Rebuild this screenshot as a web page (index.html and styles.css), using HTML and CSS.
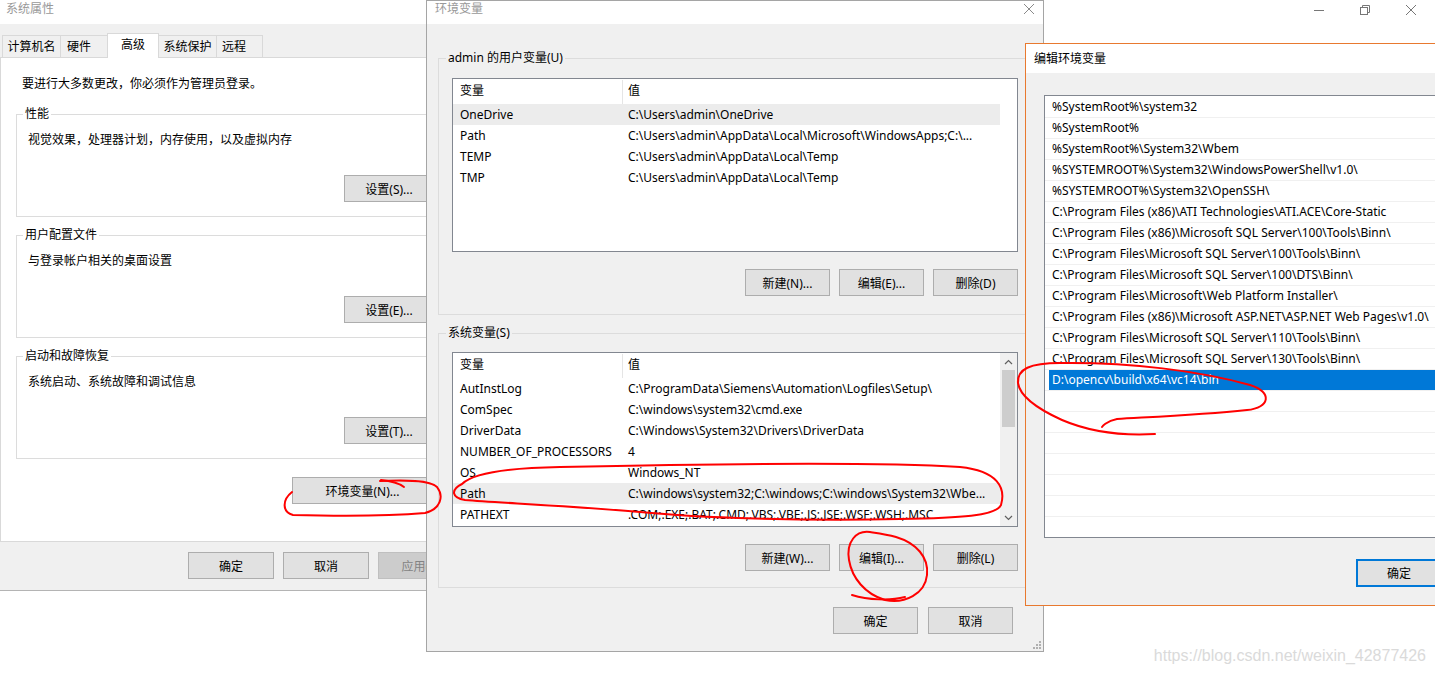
FILE: index.html
```html
<!DOCTYPE html>
<html>
<head>
    <link rel="stylesheet" href="styles.css">
</head>
<body>
    <!-- window behind, only its caption buttons show -->
    <div class="back-caption">
        <div class="cap-btn">
            <svg width="12" height="10" viewBox="0 0 12 10"><path d="M1 5.5h10" stroke="#777" stroke-width="1"/></svg>
        </div>
        <div class="cap-btn">
            <svg width="12" height="12" viewBox="0 0 12 12" fill="none" stroke="#777" stroke-width="1"><rect x="1.5" y="3.5" width="7" height="7"/><path d="M3.5 3.5v-2h7v7h-2"/></svg>
        </div>
        <div class="cap-btn">
            <svg width="12" height="12" viewBox="0 0 12 12" stroke="#777" stroke-width="1"><path d="M1 1l10 10M11 1L1 11"/></svg>
        </div>
    </div>

    <!-- 系统属性 -->
    <div class="win win-sys">
        <div class="titlebar">系统属性</div>
        <div class="win-body">
            <div class="tabs">
                <div class="tab tab-name">计算机名</div>
                <div class="tab tab-hw">硬件</div>
                <div class="tab tab-adv active">高级</div>
                <div class="tab tab-prot">系统保护</div>
                <div class="tab tab-remote">远程</div>
            </div>
            <div class="tab-panel">
                <p class="note">要进行大多数更改，你必须作为管理员登录。</p>
                <fieldset class="group">
                    <legend>性能</legend>
                    <p class="desc">视觉效果，处理器计划，内存使用，以及虚拟内存</p>
                    <div class="actions"><button class="btn btn-set">设置(S)...</button></div>
                </fieldset>
                <fieldset class="group">
                    <legend>用户配置文件</legend>
                    <p class="desc">与登录帐户相关的桌面设置</p>
                    <div class="actions"><button class="btn btn-set">设置(E)...</button></div>
                </fieldset>
                <fieldset class="group">
                    <legend>启动和故障恢复</legend>
                    <p class="desc">系统启动、系统故障和调试信息</p>
                    <div class="actions"><button class="btn btn-set">设置(T)...</button></div>
                </fieldset>
                <div class="env-row"><button class="btn btn-env">环境变量(N)...</button></div>
            </div>
            <div class="sys-footer">
                <button class="btn btn-foot">确定</button>
                <button class="btn btn-foot">取消</button>
                <button class="btn btn-foot disabled">应用(A)</button>
            </div>
        </div>
    </div>

    <!-- 环境变量 -->
    <div class="win win-env">
        <div class="titlebar">
            <span>环境变量</span>
            <svg class="close-x" width="12" height="12" viewBox="0 0 12 12" stroke="#8a8a8a" stroke-width="1"><path d="M1 1l10 10M11 1L1 11"/></svg>
        </div>
        <div class="env-body">
            <fieldset class="var-group">
                <legend>admin 的用户变量(U)</legend>
                <div class="listview user-list">
                    <div class="lv-main">
                        <div class="lv-head"><span class="c1">变量</span><span class="c2">值</span></div>
                        <div class="lv-row hl"><span class="c1">OneDrive</span><span class="c2">C:\Users\admin\OneDrive</span></div>
                        <div class="lv-row"><span class="c1">Path</span><span class="c2">C:\Users\admin\AppData\Local\Microsoft\WindowsApps;C:\...</span></div>
                        <div class="lv-row"><span class="c1">TEMP</span><span class="c2">C:\Users\admin\AppData\Local\Temp</span></div>
                        <div class="lv-row"><span class="c1">TMP</span><span class="c2">C:\Users\admin\AppData\Local\Temp</span></div>
                    </div>
                </div>
                <div class="btn-row">
                    <button class="btn">新建(N)...</button>
                    <button class="btn">编辑(E)...</button>
                    <button class="btn">删除(D)</button>
                </div>
            </fieldset>
            <fieldset class="var-group sys-group">
                <legend>系统变量(S)</legend>
                <div class="listview sys-list">
                    <div class="lv-main">
                        <div class="lv-head"><span class="c1">变量</span><span class="c2">值</span></div>
                        <div class="lv-row"><span class="c1">AutInstLog</span><span class="c2">C:\ProgramData\Siemens\Automation\Logfiles\Setup\</span></div>
                        <div class="lv-row"><span class="c1">ComSpec</span><span class="c2">C:\windows\system32\cmd.exe</span></div>
                        <div class="lv-row"><span class="c1">DriverData</span><span class="c2">C:\Windows\System32\Drivers\DriverData</span></div>
                        <div class="lv-row"><span class="c1">NUMBER_OF_PROCESSORS</span><span class="c2">4</span></div>
                        <div class="lv-row"><span class="c1">OS</span><span class="c2">Windows_NT</span></div>
                        <div class="lv-row hl"><span class="c1">Path</span><span class="c2">C:\windows\system32;C:\windows;C:\windows\System32\Wbe...</span></div>
                        <div class="lv-row"><span class="c1">PATHEXT</span><span class="c2">.COM;.EXE;.BAT;.CMD;.VBS;.VBE;.JS;.JSE;.WSF;.WSH;.MSC</span></div>
                    </div>
                    <div class="scrollbar">
                        <div class="sb-arrow"><svg width="9" height="6" viewBox="0 0 9 6" fill="none" stroke="#606060" stroke-width="1.2"><path d="M1 5l3.5-3.5L8 5"/></svg></div>
                        <div class="sb-track"><div class="sb-thumb"></div></div>
                        <div class="sb-arrow"><svg width="9" height="6" viewBox="0 0 9 6" fill="none" stroke="#606060" stroke-width="1.2"><path d="M1 1l3.5 3.5L8 1"/></svg></div>
                    </div>
                </div>
                <div class="btn-row">
                    <button class="btn">新建(W)...</button>
                    <button class="btn">编辑(I)...</button>
                    <button class="btn">删除(L)</button>
                </div>
            </fieldset>
            <div class="env-footer">
                <button class="btn">确定</button>
                <button class="btn">取消</button>
            </div>
        </div>
        <svg class="grip" width="8" height="8" viewBox="0 0 8 8" fill="#b0b0b0"><rect x="6" y="0" width="2" height="2"/><rect x="3" y="3" width="2" height="2"/><rect x="6" y="3" width="2" height="2"/><rect x="0" y="6" width="2" height="2"/><rect x="3" y="6" width="2" height="2"/><rect x="6" y="6" width="2" height="2"/></svg>
    </div>

    <!-- 编辑环境变量 -->
    <div class="win win-edit">
        <div class="titlebar active-title">编辑环境变量</div>
        <div class="edit-body">
            <div class="path-list">
                <div class="path-row"><span>%SystemRoot%\system32</span></div>
                <div class="path-row"><span>%SystemRoot%</span></div>
                <div class="path-row"><span>%SystemRoot%\System32\Wbem</span></div>
                <div class="path-row"><span>%SYSTEMROOT%\System32\WindowsPowerShell\v1.0\</span></div>
                <div class="path-row"><span>%SYSTEMROOT%\System32\OpenSSH\</span></div>
                <div class="path-row"><span>C:\Program Files (x86)\ATI Technologies\ATI.ACE\Core-Static</span></div>
                <div class="path-row"><span>C:\Program Files (x86)\Microsoft SQL Server\100\Tools\Binn\</span></div>
                <div class="path-row"><span>C:\Program Files\Microsoft SQL Server\100\Tools\Binn\</span></div>
                <div class="path-row"><span>C:\Program Files\Microsoft SQL Server\100\DTS\Binn\</span></div>
                <div class="path-row"><span>C:\Program Files\Microsoft\Web Platform Installer\</span></div>
                <div class="path-row"><span>C:\Program Files (x86)\Microsoft ASP.NET\ASP.NET Web Pages\v1.0\</span></div>
                <div class="path-row"><span>C:\Program Files\Microsoft SQL Server\110\Tools\Binn\</span></div>
                <div class="path-row"><span>C:\Program Files\Microsoft SQL Server\130\Tools\Binn\</span></div>
                <div class="path-row sel"><span>D:\opencv\build\x64\vc14\bin</span></div>
                <div class="path-row"><span></span></div>
                <div class="path-row"><span></span></div>
                <div class="path-row"><span></span></div>
                <div class="path-row"><span></span></div>
                <div class="path-row"><span></span></div>
                <div class="path-row"><span></span></div>
                <div class="path-row"><span></span></div>
            </div>
            <div class="edit-footer">
                <button class="btn btn-default">确定</button>
            </div>
        </div>
    </div>

    <div class="watermark">https://blog.csdn.net/weixin_42877426</div>

    <!-- red hand-drawn marks -->
    <svg class="ink" width="1435" height="675" viewBox="0 0 1435 675" fill="none" stroke="#ff0000" stroke-width="2" stroke-linecap="round">
        <path d="M380,481 C405,480 430,480 437,487 C444,496 441,509 425,513 C390,516 330,516 293,515 C282,512 282,500 292,492"/>
        <path d="M381,480 C392,481 400,484 404,487"/>
        <path d="M462,484 C472,474 500,468 560,467 C700,464 880,462 960,467 C998,471 1006,488 1001,505 C996,516 960,518 900,519 C800,521 700,518 640,512 C560,505 500,503 465,500 C452,498 450,490 462,484"/>
        <path d="M870,532 C856,530 846,542 849,560 C852,578 865,594 885,600 C905,604 925,594 927,575 C929,557 916,543 896,537 C886,534 877,533 870,532"/>
        <path d="M852,595 C868,600 890,601 905,597"/>
        <path d="M1155,434 C1120,436 1090,432 1062,420 C1040,410 1020,397 1018,383 C1017,369 1030,363 1060,363 C1130,362 1200,371 1250,385 C1273,392 1270,408 1247,410 C1200,415 1150,417 1117,419 C1106,421 1102,427 1102,427"/>
    </svg>
</body>
</html>
```

FILE: styles.css
```css
body {
    margin: 0;
    width: 1435px;
    height: 675px;
    overflow: hidden;
    position: relative;
    background-color: #fff;
    font-family: "Noto Sans", "Noto Sans CJK SC", sans-serif;
    font-size: 12px;
    color: #000;
}
p {
    margin: 0;
}
.win {
    position: absolute;
    box-sizing: border-box;
    display: flex;
    flex-direction: column;
    overflow: hidden;
}
.titlebar {
    flex: none;
    height: 24px;
    background-color: #fff;
    color: #999;
    padding-left: 6px;
    line-height: 17px;
    position: relative;
}
.btn {
    box-sizing: border-box;
    width: 85px;
    height: 27px;
    padding: 0;
    background-color: #e1e1e1;
    border: 1px solid #adadad;
    font-family: inherit;
    font-size: 12px;
    color: #000;
    white-space: nowrap;
}

/* back window caption */
.back-caption {
    position: absolute;
    top: 0;
    right: 1px;
    display: flex;
}
.cap-btn {
    width: 46px;
    height: 19px;
    display: flex;
    align-items: center;
    justify-content: center;
}

/* 系统属性 */
.win-sys {
    left: 0;
    top: 0;
    width: 470px;
    height: 591px;
    border-bottom: 1px solid #b4b4b4;
    z-index: 1;
}
.win-body {
    flex: 1;
    background-color: #f0f0f0;
    display: flex;
    flex-direction: column;
}
.tabs {
    display: flex;
    align-items: flex-end;
    height: 24px;
    margin-top: 9px;
    padding-left: 3px;
    position: relative;
    z-index: 1;
}
.tab {
    box-sizing: border-box;
    height: 22px;
    line-height: 22px;
    border: 1px solid #d9d9d9;
    border-bottom: none;
    margin-left: -1px;
    text-align: center;
}
.tab-name { width: 59px; }
.tab-hw { width: 48px; text-align: left; padding-left: 6px; }
.tab-adv { width: 52px; }
.tab-prot { width: 59px; }
.tab-remote { width: 47px; text-align: left; padding-left: 5px; }
.tab.active {
    height: 25px;
    line-height: 21px;
    background-color: #fff;
    margin-bottom: -1px;
}
.tab-panel {
    box-sizing: border-box;
    height: 485px;
    background-color: #fff;
    border: 1px solid #d9d9d9;
    padding: 0 15px;
}
.note {
    margin-top: 18px;
    padding-left: 6px;
    line-height: 16px;
}
.group {
    margin: 10px 0 0;
    padding: 0 19px 14px 6px;
    border: 1px solid #dcdcdc;
}
.note + .group {
    margin-top: 14px;
}
.group legend {
    padding: 0 2px;
    line-height: 16px;
}
.desc {
    margin-top: 10px;
    padding-left: 5px;
    line-height: 16px;
}
.actions {
    display: flex;
    justify-content: flex-end;
    margin-top: 27px;
}
.btn-set {
    width: 90px;
}
.env-row {
    display: flex;
    justify-content: flex-end;
    margin-top: 18px;
    padding-right: 21px;
}
.btn-env {
    width: 141px;
}
.sys-footer {
    display: flex;
    justify-content: flex-end;
    gap: 9px;
    margin-top: 10px;
    padding-right: 6px;
}
.btn-foot {
    width: 86px;
}
.btn.disabled {
    background-color: #cccccc;
    border-color: #bfbfbf;
    color: #838383;
}

/* 环境变量 */
.win-env {
    left: 426px;
    top: 0;
    width: 618px;
    height: 652px;
    border: 1px solid #a5a5a5;
    z-index: 2;
}
.win-env .titlebar {
    height: 23px;
    padding-left: 8px;
    line-height: 15px;
}
.close-x {
    position: absolute;
    right: 8px;
    top: 2px;
}
.env-body {
    flex: 1;
    background-color: #f0f0f0;
    padding: 26px 11px 0;
}
.var-group {
    margin: 0;
    padding: 0 13px 18px;
    border: 1px solid #dcdcdc;
}
.var-group legend {
    margin-left: -6px;
    padding: 0 2px;
    line-height: 16px;
}
.sys-group {
    margin-top: 10px;
    padding-bottom: 16px;
}
.listview {
    box-sizing: border-box;
    display: flex;
    background-color: #fff;
    border: 1px solid #828790;
    margin-top: 12px;
    overflow: hidden;
}
.user-list {
    height: 174px;
}
.sys-list {
    height: 175px;
    margin-top: 11px;
}
.lv-main {
    flex: 1;
    padding-top: 1px;
}
.lv-head,
.lv-row {
    display: flex;
    width: 547px;
    white-space: nowrap;
}
.lv-head {
    height: 24px;
    line-height: 22px;
}
.lv-head .c1 {
    border-right: 1px solid #e5e5e5;
}
.lv-row {
    height: 21px;
    line-height: 21px;
}
.lv-row.hl {
    background-color: #ececec;
}
.c1 {
    box-sizing: border-box;
    width: 170px;
    padding-left: 7px;
    overflow: hidden;
}
.c2 {
    box-sizing: border-box;
    flex: 1;
    padding-left: 5px;
    overflow: hidden;
}
.scrollbar {
    width: 17px;
    background-color: #f0f0f0;
    display: flex;
    flex-direction: column;
}
.sb-arrow {
    height: 17px;
    display: flex;
    align-items: center;
    justify-content: center;
}
.sb-track {
    flex: 1;
    padding: 0 2px;
}
.sb-thumb {
    height: 57px;
    background-color: #cdcdcd;
}
.btn-row {
    display: flex;
    justify-content: flex-end;
    gap: 9px;
    margin-top: 17px;
}
.env-footer {
    display: flex;
    justify-content: flex-end;
    gap: 10px;
    margin-top: 19px;
    padding-right: 19px;
}
.grip {
    position: absolute;
    right: 2px;
    bottom: 2px;
}

/* 编辑环境变量 */
.win-edit {
    left: 1025px;
    top: 43px;
    width: 600px;
    height: 563px;
    border: 1px solid #e8792f;
    z-index: 3;
}
.win-edit .titlebar {
    height: 29px;
    line-height: 29px;
    padding-left: 8px;
    color: #000;
}
.edit-body {
    flex: 1;
    background-color: #f0f0f0;
}
.path-list {
    box-sizing: border-box;
    height: 443px;
    width: 560px;
    margin: 22px 0 0 18px;
    padding-top: 1px;
    background-color: #fff;
    border: 1px solid #828790;
    overflow: hidden;
}
.path-row {
    box-sizing: border-box;
    height: 21px;
    border-bottom: 1px solid #f0f0f0;
    padding-left: 4px;
    white-space: nowrap;
}
.path-row span {
    display: block;
    height: 20px;
    line-height: 20px;
    padding-left: 3px;
}
.path-row.sel span {
    background-color: #0078d7;
    color: #fff;
}
.edit-footer {
    margin: 21px 0 0 330px;
}
.btn-default {
    width: 86px;
    height: 28px;
    border: 2px solid #0078d7;
}

.watermark {
    position: absolute;
    right: 9px;
    top: 647px;
    font-family: "Liberation Sans", Arial, sans-serif;
    font-size: 16px;
    color: #dadada;
    z-index: 4;
}
.ink {
    position: absolute;
    left: 0;
    top: 0;
    z-index: 5;
    pointer-events: none;
}
```
